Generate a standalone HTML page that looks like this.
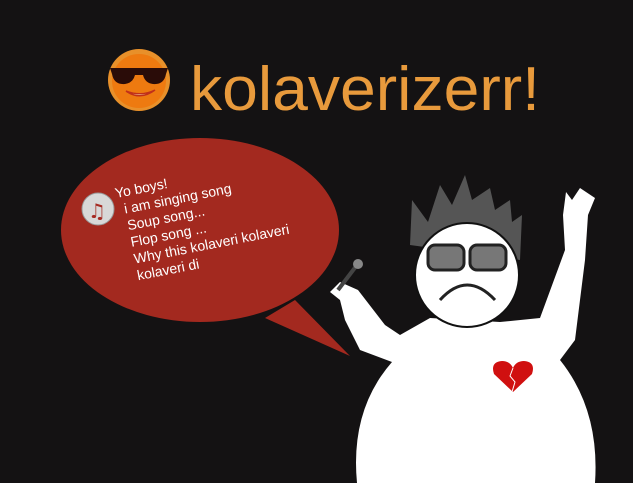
<!DOCTYPE html>
<html><head><style>
html,body{margin:0;padding:0;background:#141213;}
svg{display:block}
</style></head><body>
<svg width="633" height="483" viewBox="0 0 633 483" xmlns="http://www.w3.org/2000/svg">
<rect width="633" height="483" fill="#141213"/>
<circle cx="139" cy="80" r="31" fill="#e8902a"/>
<circle cx="139" cy="81" r="27" fill="#ee7a10"/>
<path d="M110 68 L168 68 L166 74 Q164 85 153 84 Q145 83 143 75 L135 75 Q133 83 125 84 Q114 85 112 74 Z" fill="#2a0c08"/>
<path d="M126 91 Q140 101 155 90 Q141 97 126 91 Z" fill="#fff3c0" stroke="#c0301a" stroke-width="1.5"/>
<text x="190" y="110" font-family="'Liberation Sans',sans-serif" font-size="62" fill="#e89a3c" textLength="350" lengthAdjust="spacingAndGlyphs">kolaverizerr!</text>
<path d="M295 300 L350 356 L265 318 Z" fill="#a3291f"/>
<ellipse cx="200" cy="230" rx="139" ry="92" fill="#a3291f"/>
<circle cx="98" cy="209" r="16" fill="#d8d8d8" stroke="#999" stroke-width="1"/>
<text x="88" y="218" font-family="'DejaVu Sans',sans-serif" font-size="20" fill="#a52a22">♫</text>
<g transform="rotate(-11 116 198)" font-family="'Liberation Sans',sans-serif" font-size="14" fill="#fff">
<text x="116" y="198">Yo boys!</text>
<text x="122" y="215">i am singing song</text>
<text x="122" y="232">Soup song...</text>
<text x="122" y="249">Flop song ...</text>
<text x="122" y="266">Why this kolaveri kolaveri</text>
<text x="122" y="283">kolaveri di</text>
</g>
<path d="M410 245 L412 200 L428 222 L440 185 L452 205 L465 175 L472 200 L490 188 L495 210 L510 200 L512 222 L522 215 L520 260 Z" fill="#555"/>
<path d="M330 292 L340 282 L358 290 L385 325 L400 335 L430 318 L500 322 L540 318 L565 250 L563 215 L566 192 L572 200 L580 188 L595 198 L588 215 L585 260 L575 340 L560 360 Q600 410 595 483 L357 483 Q350 410 392 362 L360 350 L345 320 L340 300 Z" fill="#fff"/>
<circle cx="467" cy="275" r="52" fill="#fff" stroke="#111" stroke-width="2"/>
<rect x="428" y="245" width="36" height="25" rx="7" fill="#777" stroke="#222" stroke-width="3"/>
<rect x="470" y="245" width="36" height="25" rx="7" fill="#777" stroke="#222" stroke-width="3"/>
<path d="M440 300 Q467 270 495 300" fill="none" stroke="#222" stroke-width="3"/>
<path d="M338 290 L357 265" stroke="#444" stroke-width="4"/>
<circle cx="358" cy="264" r="5" fill="#888"/>
<path d="M513 392 L494 374 Q490 362 502 361 Q510 361 513 368 Q516 361 524 361 Q536 362 532 374 Z" fill="#d01010"/>
<path d="M513 368 L510 376 L515 382 L512 392" fill="none" stroke="#fff" stroke-width="1"/>
</svg>
</body></html>
